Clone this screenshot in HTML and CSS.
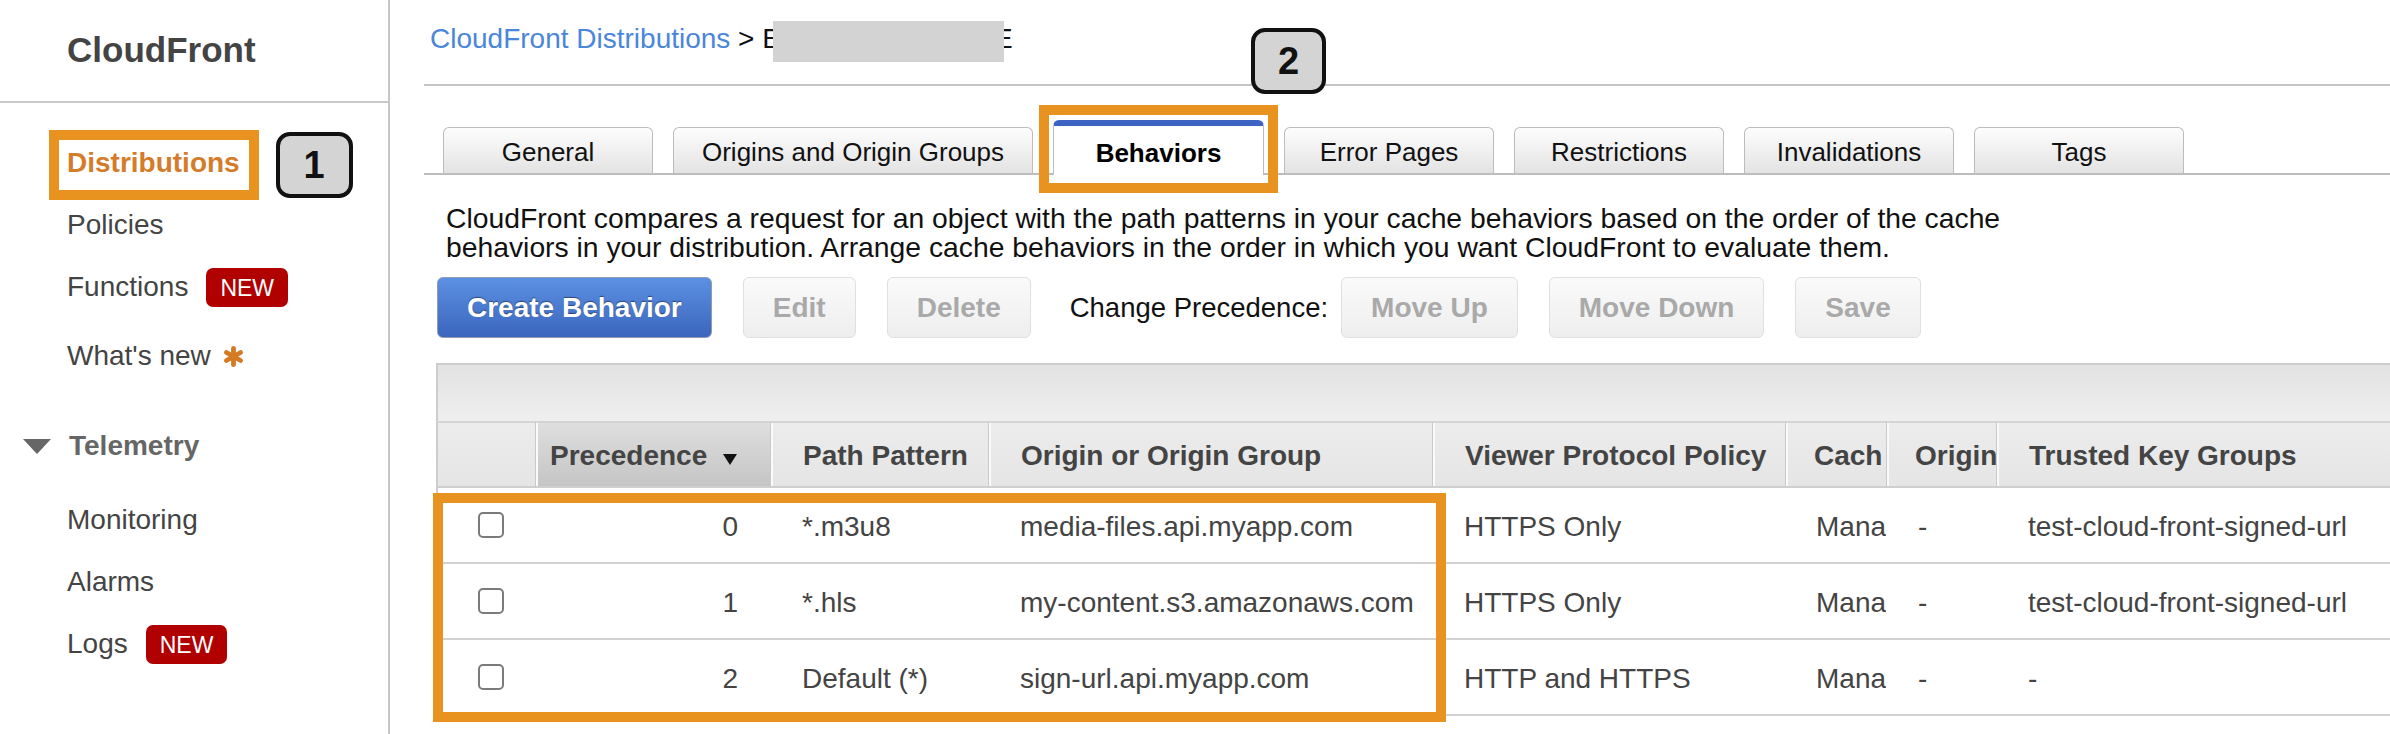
FILE: index.html
```html
<!DOCTYPE html>
<html lang="en">
<head>
    <meta charset="UTF-8">
    <meta name="viewport" content="width=device-width, initial-scale=1.0">
    <title>CloudFront Distributions - Behaviors</title>
    <link rel="stylesheet" href="styles.css">
</head>
<body>

<div class="page">
    <aside class="sidebar">
        <div class="sidebar-title">CloudFront</div>

        <ul class="nav">
            <li class="nav-item nav-current">
                <span class="mark-box">Distributions</span>
                <span class="step step-side">1</span>
            </li>
            <li class="nav-item">Policies</li>
            <li class="nav-item">Functions <span class="badge-new">NEW</span></li>
            <li class="nav-item nav-whats-new">What's new
                <svg class="star" width="23" height="23" viewBox="0 0 24 24">
                    <line x1="12" y1="3.5" x2="12" y2="20.5"/>
                    <line x1="4.6" y1="7.8" x2="19.4" y2="16.2"/>
                    <line x1="4.6" y1="16.2" x2="19.4" y2="7.8"/>
                </svg>
            </li>
        </ul>

        <div class="nav-section">
            <svg class="caret" width="30" height="17" viewBox="0 0 30 17">
                <path d="M1 1 H29 L15 16 Z"/>
            </svg>
            Telemetry
        </div>

        <ul class="nav nav-telemetry">
            <li class="nav-item">Monitoring</li>
            <li class="nav-item">Alarms</li>
            <li class="nav-item">Logs <span class="badge-new">NEW</span></li>
        </ul>
    </aside>

    <main class="main">
        <div class="breadcrumb">
            <a href="#">CloudFront Distributions</a> &gt; <span class="dist-id">E<span class="redact"></span>E</span>
        </div>

        <span class="step step-top">2</span>

        <div class="tabs">
            <div class="tab">General</div>
            <div class="tab tab-wide">Origins and Origin Groups</div>
            <div class="tab tab-active">Behaviors<span class="tab-mark"></span></div>
            <div class="tab">Error Pages</div>
            <div class="tab">Restrictions</div>
            <div class="tab">Invalidations</div>
            <div class="tab">Tags</div>
        </div>

        <p class="intro">CloudFront compares a request for an object with the path patterns in your cache behaviors based on the order of the cache behaviors in your distribution. Arrange cache behaviors in the order in which you want CloudFront to evaluate them.</p>

        <div class="toolbar">
            <button class="btn btn-primary">Create Behavior</button>
            <button class="btn btn-disabled">Edit</button>
            <button class="btn btn-disabled">Delete</button>
            <span class="toolbar-label">Change Precedence:</span>
            <button class="btn btn-disabled">Move Up</button>
            <button class="btn btn-disabled">Move Down</button>
            <button class="btn btn-disabled">Save</button>
        </div>

        <div class="grid-wrap">
            <div class="grid-bar"></div>
            <table class="grid">
                <colgroup>
                    <col style="width: 99px">
                    <col style="width: 235px">
                    <col style="width: 218px">
                    <col style="width: 444px">
                    <col style="width: 353px">
                    <col style="width: 101px">
                    <col style="width: 110px">
                    <col style="width: 500px">
                </colgroup>
                <thead>
                    <tr>
                        <th class="check"></th>
                        <th class="sorted">Precedence
                            <svg class="sort" width="14" height="11" viewBox="0 0 14 11"><path d="M0 0 H14 L7 11 Z"/></svg>
                        </th>
                        <th>Path Pattern</th>
                        <th>Origin or Origin Group</th>
                        <th>Viewer Protocol Policy</th>
                        <th class="narrow">Cach</th>
                        <th class="narrow">Origin</th>
                        <th>Trusted Key Groups</th>
                    </tr>
                </thead>
                <tbody>
                    <tr>
                        <td class="check"><input type="checkbox"></td>
                        <td class="num">0</td>
                        <td>*.m3u8</td>
                        <td>media-files.api.myapp.com</td>
                        <td>HTTPS Only</td>
                        <td class="narrow">Mana</td>
                        <td>-</td>
                        <td>test-cloud-front-signed-url</td>
                    </tr>
                    <tr>
                        <td class="check"><input type="checkbox"></td>
                        <td class="num">1</td>
                        <td>*.hls</td>
                        <td>my-content.s3.amazonaws.com</td>
                        <td>HTTPS Only</td>
                        <td class="narrow">Mana</td>
                        <td>-</td>
                        <td>test-cloud-front-signed-url</td>
                    </tr>
                    <tr>
                        <td class="check"><input type="checkbox"></td>
                        <td class="num">2</td>
                        <td>Default (*)</td>
                        <td>sign-url.api.myapp.com</td>
                        <td>HTTP and HTTPS</td>
                        <td class="narrow">Mana</td>
                        <td>-</td>
                        <td>-</td>
                    </tr>
                </tbody>
            </table>
            <div class="rows-mark"></div>
        </div>
    </main>
</div>

</body>
</html>
```

FILE: styles.css
```css
body {
    font-family: "Liberation Sans", Arial, sans-serif;
    margin: 0;
    padding: 0;
    background-color: #fff;
    color: #111;
}

.page {
    display: flex;
    height: 734px;
    overflow: hidden;
}

/* Sidebar */
.sidebar {
    width: 388px;
    flex: none;
    border-right: 2px solid #c6c6c6;
}

.sidebar-title {
    height: 40px;
    padding: 30px 0 31px 67px;
    line-height: 40px;
    font-size: 35px;
    font-weight: bold;
    color: #444;
    border-bottom: 2px solid #c9c9c9;
}

.nav {
    list-style: none;
    margin: 0;
    padding: 0 0 0 67px;
}

.nav-item {
    display: flex;
    align-items: center;
    height: 58px;
    padding-top: 4px;
    font-size: 28px;
    color: #444;
}

.nav-current {
    height: 70px;
    padding-top: 0;
    margin: 27px 0 -8px;
}

.nav-whats-new {
    margin-top: 7px;
}

.mark-box {
    height: 50px;
    margin-left: -18px;
    padding: 0 9px 0 8px;
    line-height: 45px;
    border: 10px solid #e8921f;
    color: #d47c2a;
    font-weight: bold;
}

.badge-new {
    height: 39px;
    margin-left: 18px;
    padding: 0 14px;
    line-height: 40px;
    border-radius: 7px;
    background-color: #b10000;
    color: #fff;
    font-size: 23px;
}

.star {
    margin-left: 11px;
    stroke: #d47a22;
    stroke-width: 5;
    stroke-linecap: round;
}

.nav-section {
    display: flex;
    align-items: center;
    height: 58px;
    margin-top: 28px;
    padding: 4px 0 0 22px;
    font-size: 28px;
    font-weight: bold;
    color: #666;
}

.caret {
    margin-right: 17px;
    fill: #666;
}

.nav-telemetry {
    margin-top: 12px;
}

/* numbered callouts */
.step {
    display: flex;
    align-items: center;
    justify-content: center;
    box-sizing: border-box;
    height: 66px;
    border: 4px solid #111;
    border-radius: 14px;
    background-color: #d4d4d4;
    font-size: 38px;
    font-weight: bold;
    color: #111;
}

.step-side {
    width: 77px;
    margin-left: 17px;
}

.step-top {
    position: absolute;
    left: 861px;
    top: 28px;
    width: 75px;
}

/* Main */
.main {
    flex: 1;
    min-width: 0;
    position: relative;
    padding-left: 34px;
    overflow: hidden;
}

.breadcrumb {
    height: 61px;
    padding: 23px 0 0 6px;
    line-height: 32px;
    font-size: 28px;
    white-space: nowrap;
    border-bottom: 2px solid #c4c4c4;
}

.breadcrumb a {
    color: #4a86da;
    text-decoration: none;
}

.redact {
    display: inline-block;
    position: relative;
    width: 231px;
    height: 41px;
    margin: -2px -10px 0 -8px;
    vertical-align: top;
    background-color: #d3d3d3;
}

.tabs {
    display: flex;
    align-items: flex-end;
    gap: 20px;
    margin-top: 34px;
    padding-left: 19px;
    border-bottom: 2px solid #bdbdbd;
}

.tab {
    box-sizing: border-box;
    width: 210px;
    padding-top: 4px;
    line-height: 41px;
    border: 1px solid #bcbcbc;
    border-bottom: none;
    border-radius: 6px 6px 0 0;
    background: linear-gradient(#fdfdfd, #e3e3e3);
    text-align: center;
    font-size: 26px;
    color: #111;
}

.tab-wide {
    width: 360px;
}

.tab-active {
    position: relative;
    width: 211px;
    padding: 6px 0 1px;
    margin-bottom: -2px;
    line-height: 42px;
    border-top: 6px solid #3d63c3;
    background: #fff;
    font-weight: bold;
    color: #000;
}

.tab-mark {
    position: absolute;
    left: -15px;
    top: -21px;
    width: 239px;
    height: 88px;
    box-sizing: border-box;
    border: 10px solid #e8921f;
}

.intro {
    width: 1640px;
    margin: 29px 0 0 22px;
    font-size: 28.3px;
    line-height: 29px;
    color: #111;
}

.toolbar {
    display: flex;
    align-items: center;
    gap: 31px;
    margin: 15px 0 0 13px;
}

.btn {
    box-sizing: border-box;
    height: 61px;
    padding: 0 29px;
    border: 1px solid;
    border-radius: 6px;
    font-family: "Liberation Sans", Arial, sans-serif;
    font-size: 28px;
    font-weight: bold;
    line-height: 59px;
}

.btn-primary {
    background: linear-gradient(#5b90e2, #3b66bd);
    border-color: #8f9cb2;
    color: #fff;
    text-shadow: 0 -1px 1px rgba(0, 0, 0, 0.45);
}

.btn-disabled {
    background: linear-gradient(#fafafa, #eeeeee);
    border-color: #e0e0e0;
    color: #a9a9a9;
}

.toolbar-label {
    margin: 0 -18px 0 8px;
    font-size: 27.5px;
    color: #111;
}

/* Behaviors table */
.grid-wrap {
    position: relative;
    margin: 25px 0 0 12px;
}

.grid-bar {
    height: 56px;
    border-top: 2px solid #cdcdcd;
    border-left: 2px solid #cdcdcd;
    background: linear-gradient(#e2e2e2, #efefef);
}

.grid {
    width: 1960px;
    table-layout: fixed;
    border-collapse: separate;
    border-spacing: 0;
}

.grid th {
    height: 60px;
    padding: 3px 0 0 32px;
    border-top: 2px solid #d4d4d4;
    border-bottom: 2px solid #cfcfcf;
    background: linear-gradient(#ececec, #e5e5e5);
    text-align: left;
    font-size: 28px;
    font-weight: bold;
    color: #444;
    white-space: nowrap;
    overflow: hidden;
}

.grid th + th {
    border-left: 1px solid #c9c9c9;
    box-shadow: inset 2px 0 0 #fafafa;
}

.grid th.sorted {
    padding: 3px 33px 0 0;
    text-align: right;
    background: linear-gradient(#dedede, #c5c5c5);
}

.grid th.narrow {
    padding-left: 28px;
}

.sort {
    margin-left: 8px;
    fill: #111;
}

.grid td {
    height: 70px;
    padding: 4px 0 0 32px;
    border-bottom: 2px solid #d2d2d2;
    font-size: 28px;
    color: #444;
    white-space: nowrap;
    overflow: hidden;
}

.grid td.narrow {
    padding-left: 31px;
}

.grid .check {
    padding: 0 0 0 40px;
    border-left: 2px solid #cdcdcd;
}

.grid td.num {
    padding: 4px 32px 0 0;
    text-align: right;
}

.grid input {
    display: block;
    width: 26px;
    height: 26px;
    margin: 0;
    -webkit-appearance: none;
    appearance: none;
    border: 2px solid #7b7b7b;
    border-radius: 5px;
    background-color: #fff;
}

.rows-mark {
    position: absolute;
    left: -3px;
    top: 130px;
    width: 1013px;
    height: 229px;
    box-sizing: border-box;
    border: 10px solid #e8921f;
}
```
